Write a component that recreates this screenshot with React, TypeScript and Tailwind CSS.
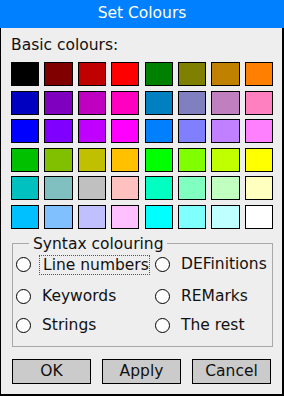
import React from "react";

const swatches = [
  ["#000000", "#800000", "#c00000", "#ff0000", "#008000", "#808000", "#c08000", "#ff8000"],
  ["#0000c0", "#8000c0", "#c000c0", "#ff00c0", "#0080c0", "#8080c0", "#c080c0", "#ff80c0"],
  ["#0000ff", "#8000ff", "#c000ff", "#ff00ff", "#0080ff", "#8080ff", "#c080ff", "#ff80ff"],
  ["#00c000", "#80c000", "#c0c000", "#ffc000", "#00ff00", "#80ff00", "#c0ff00", "#ffff00"],
  ["#00c0c0", "#80c0c0", "#c0c0c0", "#ffc0c0", "#00ffc0", "#80ffc0", "#c0ffc0", "#ffffc0"],
  ["#00c0ff", "#80c0ff", "#c0c0ff", "#ffc0ff", "#00ffff", "#80ffff", "#c0ffff", "#ffffff"],
];

const Radio = ({ label, focus = false }: { label: string; focus?: boolean }) => (
  <div className="flex items-center h-[20px]">
    <span className="w-[15px] h-[15px] rounded-full border border-black bg-white shrink-0"></span>
    <span
      className={
        focus
          ? "ml-[8px] pl-[3px] pr-0 h-[20px] leading-[18px] border border-dotted border-[#555] whitespace-nowrap"
          : "ml-[11px] whitespace-nowrap"
      }
    >
      {label}
    </span>
  </div>
);

export default function App() {
  return (
    <div className="w-[284px] h-[396px] flex flex-col text-[15.5px] text-[#111] font-['DejaVu_Sans',sans-serif]">
      {/* title */}
      <div className="h-[28px] bg-[#0080ff] text-white flex items-center justify-center shrink-0">Set Colours</div>

      {/* body */}
      <div className="flex-1 bg-[#eeeeee] border-l border-r-2 border-b-2 border-black pl-[10px] flex flex-col">
        <div className="mt-[8px] leading-[18px]">Basic colours:</div>

        <div className="mt-[8px] w-[262px] grid grid-cols-8 gap-x-[5.3px] gap-y-[4.6px]">
          {swatches.flat().map((c, i) => (
            <div key={i} className="h-[24px] border border-black" style={{ backgroundColor: c }}></div>
          ))}
        </div>

        {/* syntax colouring group */}
        <fieldset className="mt-[6px] ml-[1px] w-[261px] h-[112px] border border-[#a8a8a8] pl-[3px]">
          <legend className="ml-[13px] px-[4px] leading-[18px]">Syntax colouring</legend>
          <div className="grid grid-cols-[139px_1fr] mt-[2px]">
            <Radio label="Line numbers" focus />
            <Radio label="DEFinitions" />
            <div className="col-span-2 grid grid-cols-[139px_1fr] mt-[12px]">
              <Radio label="Keywords" />
              <Radio label="REMarks" />
            </div>
            <div className="col-span-2 grid grid-cols-[139px_1fr] mt-[9px]">
              <Radio label="Strings" />
              <Radio label="The rest" />
            </div>
          </div>
        </fieldset>

        <div className="mt-[12px] flex gap-[11px] pl-[1px]">
          {["OK", "Apply", "Cancel"].map((b) => (
            <button key={b} className="w-[79px] h-[25px] bg-[#cbcbcb] border border-black flex items-center justify-center leading-none">
              {b}
            </button>
          ))}
        </div>
      </div>
    </div>
  );
}
